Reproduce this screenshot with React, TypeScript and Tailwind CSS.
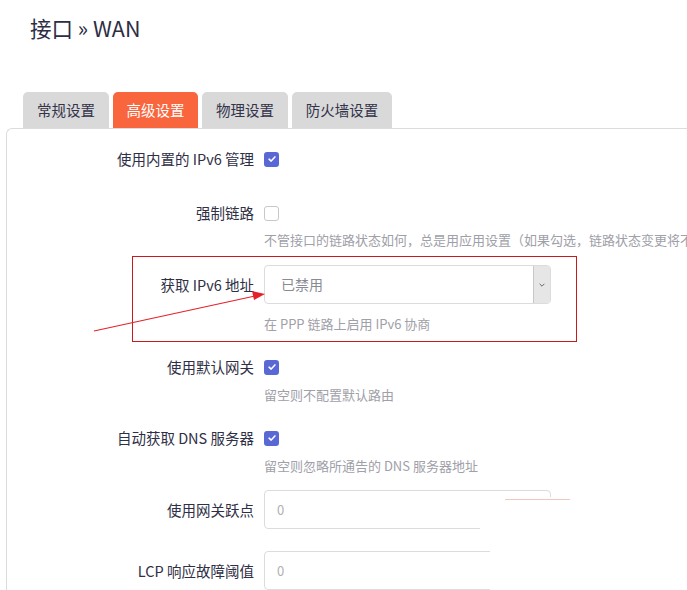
import React from "react"

const font = { fontFamily: '"Noto Sans CJK SC", "Noto Sans", sans-serif' }

const tabs = [
  { label: "常规设置", width: "w-[86px]" },
  { label: "高级设置", width: "w-[85px]", active: true },
  { label: "物理设置", width: "w-[86px]" },
  { label: "防火墙设置", width: "w-[100px]" },
]

function Check({ on }: { on?: boolean }) {
  if (!on) return <span className="block h-[15px] w-[15px] rounded-[3px] border border-[#c8c8c8] bg-white" />
  return (
    <span className="flex h-[15px] w-[15px] items-center justify-center rounded-[3px] bg-[#5869d6]">
      <svg viewBox="0 0 12 12" className="h-[10px] w-[10px]">
        <path d="M2.5 6.2 L5 8.5 L9.5 3.5" fill="none" stroke="white" strokeWidth="1.8" strokeLinecap="round" strokeLinejoin="round" />
      </svg>
    </span>
  )
}

function Row({ label, children, className = "" }: { label: string; children: React.ReactNode; className?: string }) {
  return (
    <div className={`flex items-center ${className}`}>
      <div className="w-[257px] shrink-0 pr-[10px] text-right text-[14.5px] text-[#2f2f45]">{label}</div>
      <div className="flex items-center">{children}</div>
    </div>
  )
}

function Desc({ children, className = "" }: { children: React.ReactNode; className?: string }) {
  return (
    <div className={`h-[20px] overflow-hidden whitespace-nowrap pl-[257px] text-[13px] leading-[20px] text-[#a0a0a8] ${className}`}>
      {children}
    </div>
  )
}

function TextInput({ value }: { value: string }) {
  return (
    <div className="flex h-[39px] w-[287px] items-center rounded-[4px] border border-[#dcdcdc] bg-white pl-[12px] text-[13px] text-[#b0b0b0]">
      {value}
    </div>
  )
}

export default function App() {
  return (
    <div className="relative h-[590px] w-[687px] overflow-hidden bg-white" style={font}>
      <h1 className="pl-[30px] pt-[14px] text-[21.5px] leading-[28px] text-[#2d2d44]">接口 » WAN</h1>

      <div className="mt-[50px] flex gap-[4px] pl-[23px]">
        {tabs.map((t) => (
          <div
            key={t.label}
            className={`flex h-[36px] items-center justify-center rounded-t-[5px] text-[14.5px] ${t.width} ${
              t.active ? "bg-[#f9653d] text-white" : "bg-[#d9d9d9] text-[#33334a]"
            }`}
          >
            {t.label}
          </div>
        ))}
      </div>

      <div className="ml-[6px] h-[470px] rounded-tl-[6px] border-l border-t border-[#dcdcdc] pt-[20px]">
        <Row label="使用内置的 IPv6 管理" className="h-[20px]">
          <Check on />
        </Row>

        <Row label="强制链路" className="mt-[34px] h-[20px]">
          <Check />
        </Row>
        <Desc className="mt-[7px]">不管接口的链路状态如何，总是用应用设置（如果勾选，链路状态变更将不再调用热插拔脚本）</Desc>

        <Row label="获取 IPv6 地址" className="mt-[15px] h-[39px]">
          <div className="flex h-[39px] w-[287px] items-center rounded-[4px] border border-[#dcdcdc] bg-white">
            <span className="flex-1 pl-[16px] text-[14px] text-[#8a8a92]">已禁用</span>
            <span className="flex h-[37px] w-[17px] items-center justify-center rounded-r-[3px] border-l border-[#c8c8c8] bg-[#e6e6e6]">
              <svg viewBox="0 0 10 10" className="h-[8px] w-[8px]">
                <path d="M2 3.5 L5 6.5 L8 3.5" fill="none" stroke="#555" strokeWidth="1.1" />
              </svg>
            </span>
          </div>
        </Row>
        <Desc className="mt-[10px]">在 PPP 链路上启用 IPv6 协商</Desc>

        <Row label="使用默认网关" className="mt-[23px] h-[20px]">
          <Check on />
        </Row>
        <Desc className="mt-[8px]">留空则不配置默认路由</Desc>

        <Row label="自动获取 DNS 服务器" className="mt-[23px] h-[20px]">
          <Check on />
        </Row>
        <Desc className="mt-[8px]">留空则忽略所通告的 DNS 服务器地址</Desc>

        <Row label="使用网关跃点" className="mt-[14px] h-[39px]">
          <TextInput value="0" />
        </Row>

        <Row label="LCP 响应故障阈值" className="mt-[22px] h-[39px]">
          <TextInput value="0" />
        </Row>
      </div>

      {/* annotation overlay */}
      <div className="pointer-events-none absolute left-[132px] top-[256px] h-[86px] w-[445px] border border-[#c8191e]" />
      <svg className="pointer-events-none absolute left-0 top-0" width="687" height="590">
        <line x1="94" y1="331" x2="255" y2="296" stroke="#e5222a" strokeWidth="1.2" />
        <polygon points="265,294 252,291 254,300" fill="#e5222a" />
      </svg>
      {/* erased patches from the screenshot */}
      <div className="absolute left-[480px] top-[497px] h-[50px] w-[207px] bg-white" />
      <div className="absolute left-[490px] top-[547px] h-[43px] w-[197px] bg-white" />
      <div className="absolute left-[505px] top-[499px] h-px w-[65px] bg-[#f0c8c0]" />
    </div>
  )
}
